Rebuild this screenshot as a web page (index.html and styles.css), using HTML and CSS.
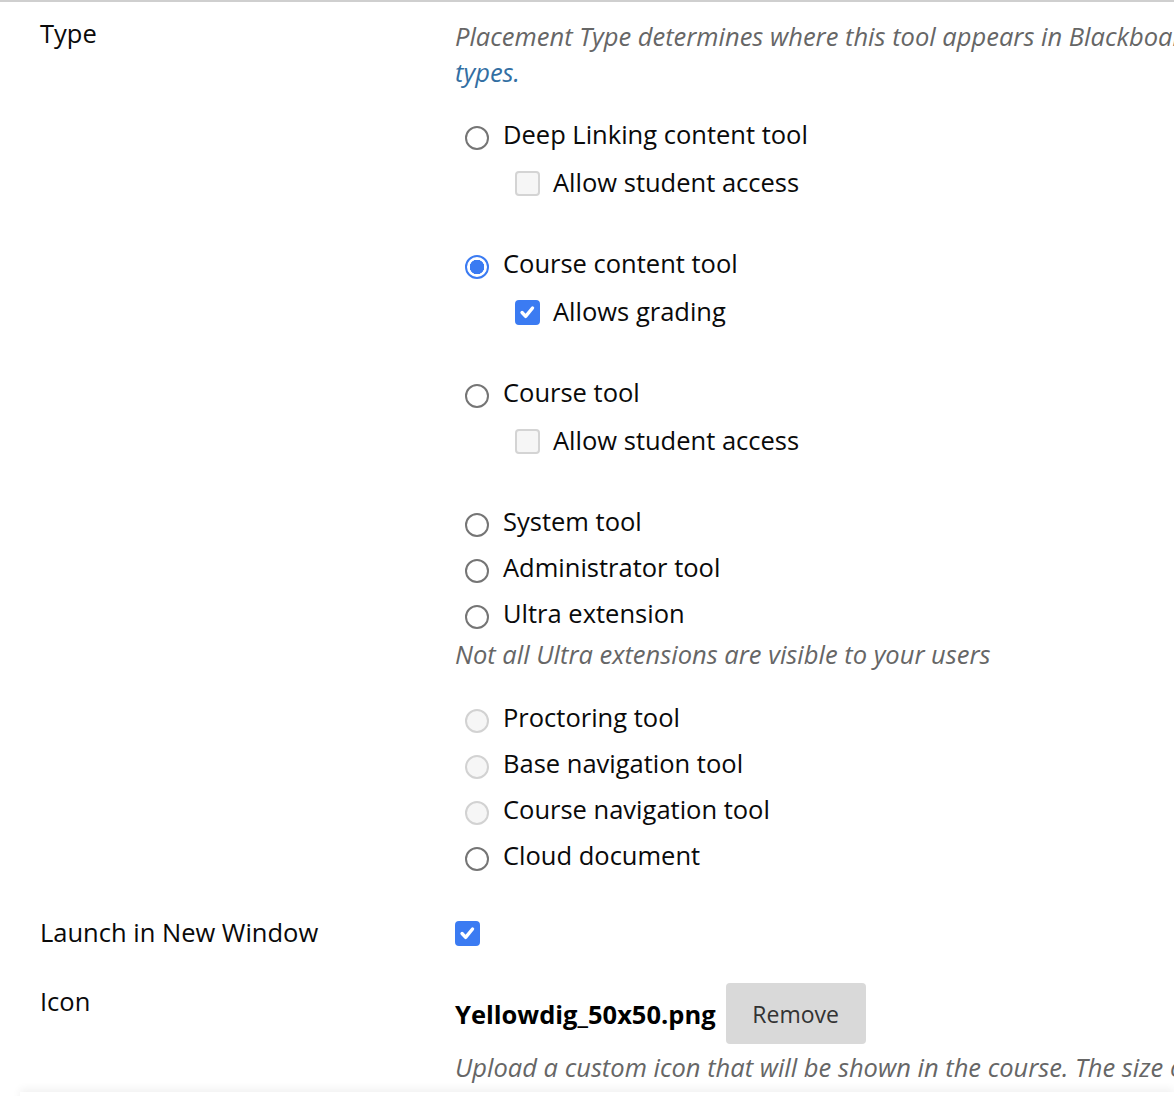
FILE: index.html
```html
<!DOCTYPE html>
<html lang="en">
<head>
  <meta charset="UTF-8" />
  <meta name="viewport" content="width=device-width, initial-scale=1.0"/>
  <title>Tool Placement</title>
  <link rel="stylesheet" href="styles.css">
</head>
<body>
<form class="placement">

  <div class="field">
    <div class="field-label">Type</div>
    <div class="field-body">
      <p class="hint">Placement Type determines where this tool appears in Blackboard Learn. <a href="#">Learn more about placement</a><br><a href="#">types.</a></p>

      <div class="options">
        <div class="group">
          <label class="option"><input type="radio" name="type" class="radio"> Deep Linking content tool</label>
          <label class="sub"><input type="checkbox" class="check"> Allow student access</label>
        </div>
        <div class="group">
          <label class="option"><input type="radio" name="type" class="radio" checked> Course content tool</label>
          <label class="sub"><input type="checkbox" class="check" checked> Allows grading</label>
        </div>
        <div class="group">
          <label class="option"><input type="radio" name="type" class="radio"> Course tool</label>
          <label class="sub"><input type="checkbox" class="check"> Allow student access</label>
        </div>
        <div class="group">
          <label class="option"><input type="radio" name="type" class="radio"> System tool</label>
          <label class="option"><input type="radio" name="type" class="radio"> Administrator tool</label>
          <label class="option"><input type="radio" name="type" class="radio"> Ultra extension</label>
          <p class="hint note">Not all Ultra extensions are visible to your users</p>
        </div>
        <div class="group more">
          <label class="option"><input type="radio" name="type" class="radio" disabled> Proctoring tool</label>
          <label class="option"><input type="radio" name="type" class="radio" disabled> Base navigation tool</label>
          <label class="option"><input type="radio" name="type" class="radio" disabled> Course navigation tool</label>
          <label class="option"><input type="radio" name="type" class="radio"> Cloud document</label>
        </div>
      </div>
    </div>
  </div>

  <div class="field launch">
    <div class="field-label">Launch in New Window</div>
    <div class="field-body">
      <input type="checkbox" class="check" checked>
    </div>
  </div>

  <div class="field icon">
    <div class="field-label">Icon</div>
    <div class="field-body">
      <div class="file">
        <span class="file-name">Yellowdig_50x50.png</span>
        <button type="button" class="btn">Remove</button>
      </div>
      <p class="hint">Upload a custom icon that will be shown in the course. The size of the icon should be 50x50 pixels.</p>
    </div>
  </div>

</form>
<div class="footer"></div>
</body>
</html>
```

FILE: styles.css
```css
* {
  margin: 0;
  padding: 0;
  box-sizing: border-box;
}

html, body {
  overflow: hidden;
}

body {
  font-family: "Open Sans", "Noto Sans", sans-serif;
  font-size: 25.5px;
  color: #0a0a0a;
  background: #fff;
  height: 1096px;
  border-top: 2px solid #cfcfcf;
  position: relative;
}

.placement {
  width: 1700px;
  padding-top: 16px;
}

.field {
  display: grid;
  grid-template-columns: 455px 1fr;
}

.field-label {
  padding-left: 40px;
  line-height: 30px;
}

.hint {
  font-style: italic;
  color: #666;
  line-height: 36px;
  white-space: nowrap;
}

.hint a {
  color: #336fa3;
  text-decoration: none;
}

.options {
  margin-top: 21px;
  padding-left: 10px;
}

.group {
  margin-bottom: 33px;
}

.group .note {
  margin-left: -10px;
}

.group.more {
  margin-top: -11px;
  margin-bottom: 0;
}

.option,
.sub {
  display: flex;
  align-items: center;
  gap: 14px;
  height: 46px;
  cursor: pointer;
}

.sub {
  height: 50px;
  padding-left: 50px;
  gap: 13px;
}

.radio,
.check {
  appearance: none;
  -webkit-appearance: none;
  flex: none;
  margin: 8px 0 0;
}

.radio {
  width: 24px;
  height: 24px;
  border: 2px solid #757575;
  border-radius: 50%;
  background: #fff;
}

.radio:checked {
  border-color: #3b7bf2;
  background: radial-gradient(circle, #3b7bf2 0 7px, #fff 7.5px);
}

.radio:disabled {
  border-color: #d2d2d2;
  background: #f6f6f6;
}

.check {
  width: 25px;
  height: 25px;
  border: 2px solid #d4d4d4;
  border-radius: 4px;
  background: #f6f6f6;
  margin-top: 2px;
}

.check:checked {
  border-color: #3b7bf2;
  background: #3b7bf2 url("data:image/svg+xml,%3Csvg xmlns='http://www.w3.org/2000/svg' viewBox='0 0 25 25'%3E%3Cpath d='M6 12.5l4.3 4.6 8.2-10' fill='none' stroke='%23fff' stroke-width='4' stroke-linecap='round' stroke-linejoin='round'/%3E%3C/svg%3E") no-repeat center / 100% 100%;
}

.launch {
  margin-top: 31px;
}

.launch .field-label {
  line-height: 46px;
}

.launch .field-body {
  display: flex;
  align-items: center;
  height: 46px;
}

.launch .check {
  margin: 3px 0 0;
}

.icon {
  margin-top: 23px;
}

.icon .field-label {
  line-height: 46px;
}

.file {
  display: flex;
  align-items: center;
  gap: 10px;
  margin-top: 5px;
}

.file-name {
  font-weight: bold;
  color: #000;
}

.btn {
  font: inherit;
  font-size: 23px;
  color: #333;
  background: #d9d9d9;
  border: none;
  border-radius: 4px;
  width: 140px;
  height: 61px;
  cursor: pointer;
}

.icon .hint {
  margin-top: 5px;
}

.footer {
  position: absolute;
  left: 20px;
  right: 0;
  top: 1090px;
  height: 20px;
  background: #fff;
  box-shadow: 0 -3px 8px rgba(0, 0, 0, 0.06);
}
```
